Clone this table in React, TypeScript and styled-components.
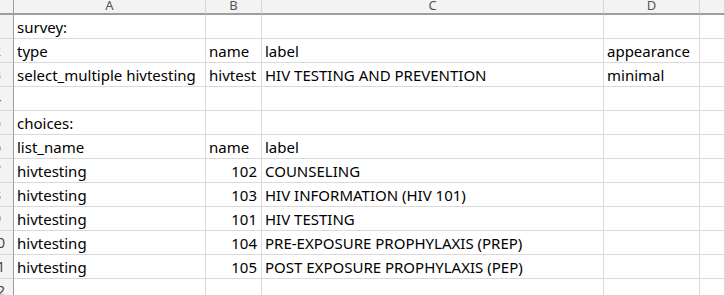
import React from 'react';
import styled, { createGlobalStyle } from 'styled-components';

const GlobalStyle = createGlobalStyle`
  html, body {
    margin: 0;
    padding: 0;
    background: #ffffff;
    overflow: hidden;
  }
`;

// column widths include the 1px grid line on the right
const COLS = '14px 192px 56px 342px 96px 1fr';

const Sheet = styled.div`
  display: grid;
  grid-template-columns: ${COLS};
  grid-template-rows: 15px;
  grid-auto-rows: 24px;
  width: 725px;
  height: 295px;
  overflow: hidden;
  font-family: 'Noto Sans', 'Liberation Sans', sans-serif;
  font-size: 15px;
  color: #000000;
  background: #ffffff;
`;

const Corner = styled.div`
  background: #f3f3f3;
  border-right: 1px solid #9e9e9e;
  border-bottom: 2px solid #9e9e9e;
`;

const ColHead = styled.div`
  background: #f3f3f3;
  border-right: 1px solid #d6d6d6;
  border-bottom: 2px solid #9e9e9e;
  overflow: hidden;
  text-align: center;
  font-size: 13px;
  line-height: 10px;
  color: #555555;
`;

const RowHead = styled.div`
  background: #f3f3f3;
  border-right: 1px solid #9e9e9e;
  border-bottom: 1px solid #d6d6d6;
  overflow: hidden;
  display: flex;
  align-items: flex-end;
`;

// the row header is scrolled left, so only the tail of each number shows
const RowNum = styled.span`
  flex: none;
  width: 30px;
  margin-left: -18px;
  text-align: center;
  font-size: 14px;
  line-height: 20px;
  padding-bottom: 1px;
  color: #444444;
`;

const Cell = styled.div<{ $num?: boolean }>`
  border-right: 1px solid #dadada;
  border-bottom: 1px solid #dadada;
  display: flex;
  align-items: flex-end;
  justify-content: ${(p) => (p.$num ? 'flex-end' : 'flex-start')};
  padding: 0 ${(p) => (p.$num ? '4px' : '0')} 1px ${(p) => (p.$num ? '0' : '3px')};
  line-height: 20px;
  white-space: nowrap;
  overflow: visible;
  min-width: 0;
`;

type Row = (string | number)[];

const rows: Row[] = [
  ['survey:', '', '', '', ''],
  ['type', 'name', 'label', 'appearance', ''],
  ['select_multiple hivtesting', 'hivtest', 'HIV TESTING AND PREVENTION', 'minimal', ''],
  ['', '', '', '', ''],
  ['choices:', '', '', '', ''],
  ['list_name', 'name', 'label', '', ''],
  ['hivtesting', 102, 'COUNSELING', '', ''],
  ['hivtesting', 103, 'HIV INFORMATION (HIV 101)', '', ''],
  ['hivtesting', 101, 'HIV TESTING', '', ''],
  ['hivtesting', 104, 'PRE-EXPOSURE PROPHYLAXIS (PREP)', '', ''],
  ['hivtesting', 105, 'POST EXPOSURE PROPHYLAXIS (PEP)', '', ''],
  ['', '', '', '', ''],
];

// column E is scrolled so its letter sits past the window edge
const letters = ['A', 'B', 'C', 'D', ''];

export default function App() {
  return (
    <>
      <GlobalStyle />
      <Sheet>
        <Corner />
        {letters.map((l, i) => (
          <ColHead key={i}>{l}</ColHead>
        ))}
        {rows.map((row, r) => (
          <React.Fragment key={r}>
            <RowHead>
              <RowNum>{r + 1}</RowNum>
            </RowHead>
            {row.map((v, c) => (
              <Cell key={c} $num={typeof v === 'number'}>
                {v}
              </Cell>
            ))}
          </React.Fragment>
        ))}
      </Sheet>
    </>
  );
}
